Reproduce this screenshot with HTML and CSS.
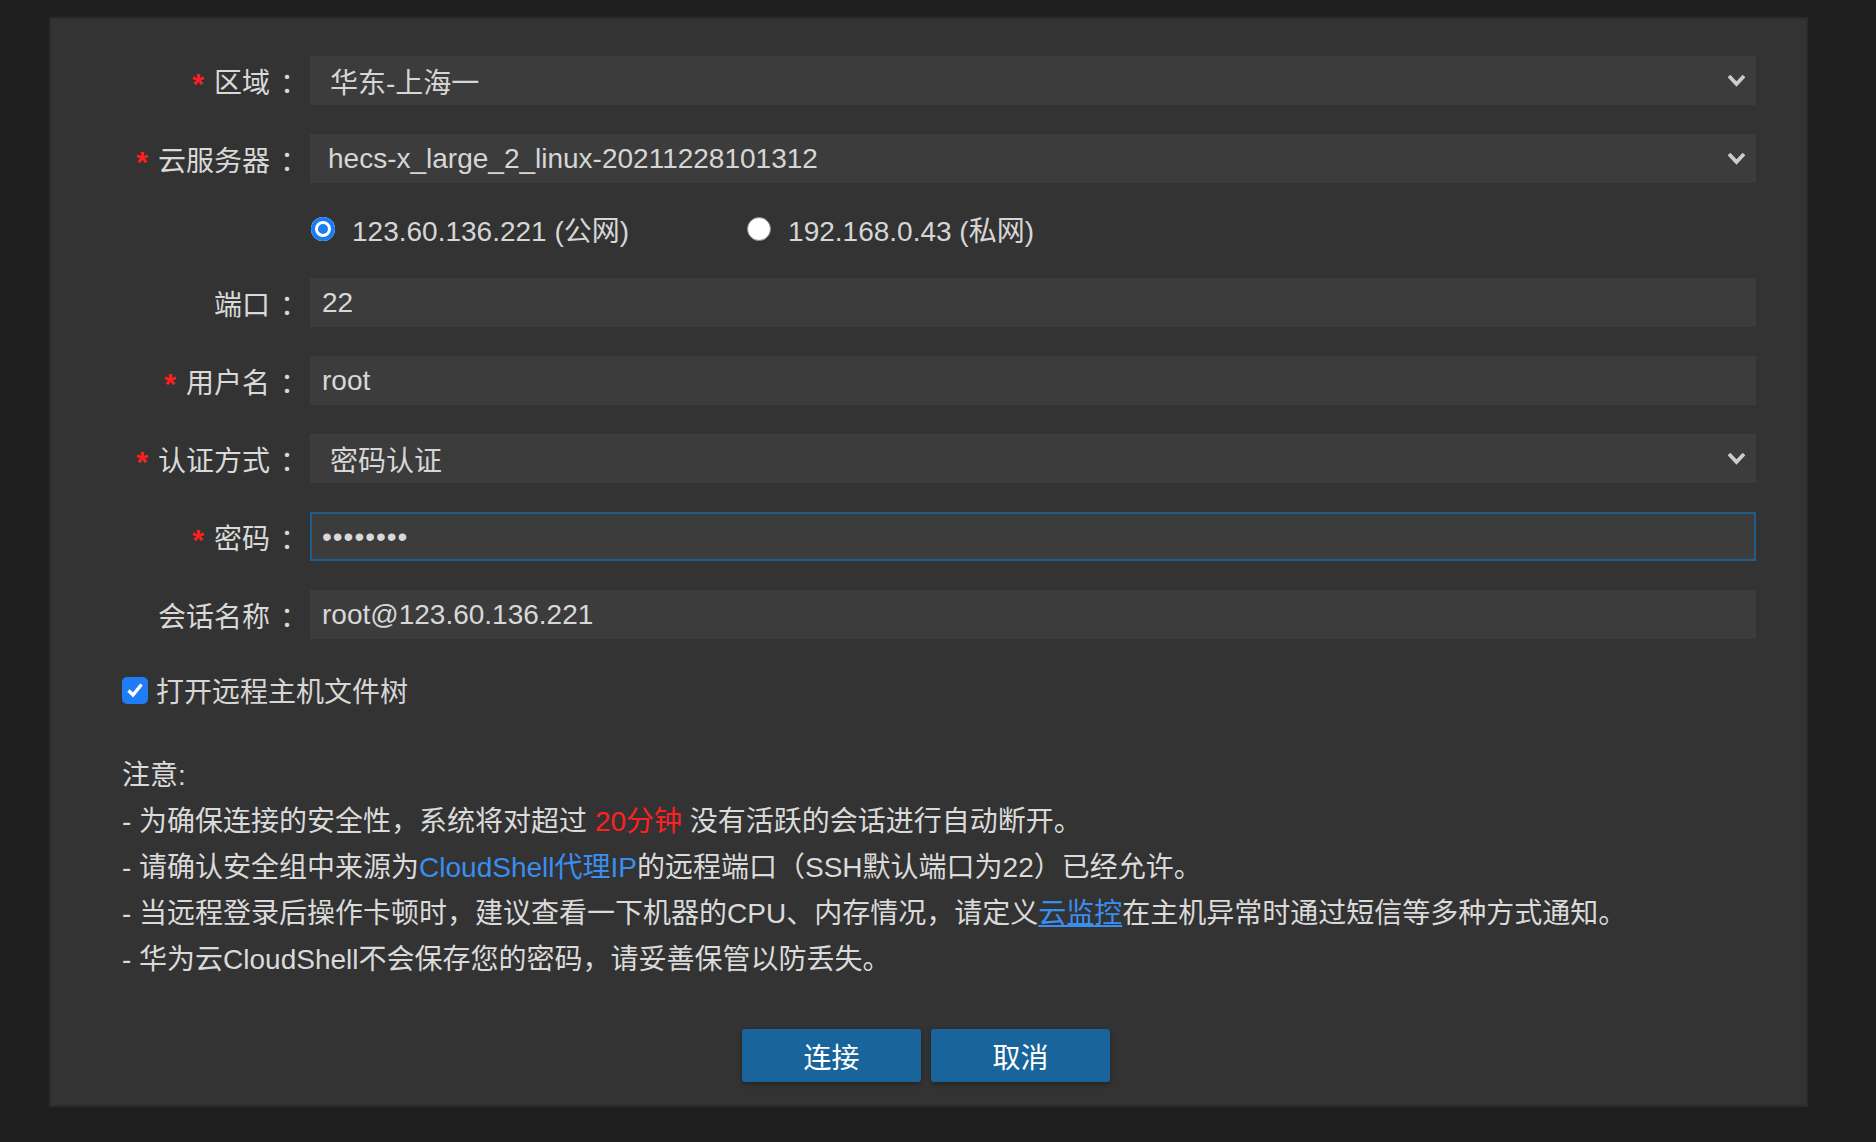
FILE: index.html
```html
<html>
<head>
    <title>CloudShell 远程登录</title>
    <meta charset="utf-8">
    <link rel="stylesheet" href="styles.css">
</head>
<body>
<div class="panel">
    <div class="form">
        <div class="form-row">
            <label class="field-label"><span class="req">*</span>区域<span class="colon">：</span></label>
            <div class="select">
                <span class="select-value">华东-上海一</span>
                <svg class="chevron" width="19" height="13" viewBox="0 0 19 13"><polyline points="2,2 9.5,10 17,2" fill="none" stroke="#cccccc" stroke-width="3.8"/></svg>
            </div>
        </div>
        <div class="form-row">
            <label class="field-label"><span class="req">*</span>云服务器<span class="colon">：</span></label>
            <div class="select">
                <span class="select-value latin">hecs-x_large_2_linux-20211228101312</span>
                <svg class="chevron" width="19" height="13" viewBox="0 0 19 13"><polyline points="2,2 9.5,10 17,2" fill="none" stroke="#cccccc" stroke-width="3.8"/></svg>
            </div>
        </div>
        <div class="form-row radio-row">
            <span></span>
            <div class="radios">
                <label class="radio"><span class="radio-dot checked"></span>123.60.136.221 (公网)</label>
                <label class="radio"><span class="radio-dot"></span>192.168.0.43 (私网)</label>
            </div>
        </div>
        <div class="form-row">
            <label class="field-label">端口<span class="colon">：</span></label>
            <input class="text-input" type="text" value="22">
        </div>
        <div class="form-row">
            <label class="field-label"><span class="req">*</span>用户名<span class="colon">：</span></label>
            <input class="text-input" type="text" value="root">
        </div>
        <div class="form-row">
            <label class="field-label"><span class="req">*</span>认证方式<span class="colon">：</span></label>
            <div class="select">
                <span class="select-value">密码认证</span>
                <svg class="chevron" width="19" height="13" viewBox="0 0 19 13"><polyline points="2,2 9.5,10 17,2" fill="none" stroke="#cccccc" stroke-width="3.8"/></svg>
            </div>
        </div>
        <div class="form-row">
            <label class="field-label"><span class="req">*</span>密码<span class="colon">：</span></label>
            <input class="text-input focused" type="password" value="12345678">
        </div>
        <div class="form-row">
            <label class="field-label">会话名称<span class="colon">：</span></label>
            <input class="text-input" type="text" value="root@123.60.136.221">
        </div>
    </div>

    <label class="check-row">
        <span class="checkbox">
            <svg width="20" height="20" viewBox="0 0 20 20"><polyline points="3.5,10.5 8,15 16.5,4.5" fill="none" stroke="#ffffff" stroke-width="3.4"/></svg>
        </span>
        打开远程主机文件树
    </label>

    <div class="notes">
        <p>注意:</p>
        <p>- 为确保连接的安全性，系统将对超过 <span class="warn">20分钟</span> 没有活跃的会话进行自动断开。</p>
        <p>- 请确认安全组中来源为<a class="link">CloudShell代理IP</a>的远程端口（SSH默认端口为22）已经允许。</p>
        <p>- 当远程登录后操作卡顿时，建议查看一下机器的CPU、内存情况，请定义<a class="link underline">云监控</a>在主机异常时通过短信等多种方式通知。</p>
        <p>- 华为云CloudShell不会保存您的密码，请妥善保管以防丢失。</p>
    </div>

    <div class="actions">
        <button class="btn">连接</button>
        <button class="btn">取消</button>
    </div>
</div>
</body>
</html>
```

FILE: styles.css
```css
body {
    margin: 0;
    background: #1e1e1e;
    font-family: "Liberation Sans", "Noto Sans CJK SC", sans-serif;
    font-size: 28px;
    color: #d6d6d6;
}

.panel {
    margin: 17px 0 0 49px;
    width: 1759px;
    height: 1090px;
    box-sizing: border-box;
    background: #333333;
    border: 2px solid #2b2b2b;
    padding: 37px 50px 0 51px;
}

.form {
    display: flex;
    flex-direction: column;
    gap: 29px;
}

.form-row {
    display: grid;
    grid-template-columns: 206px 1fr;
    column-gap: 2px;
    align-items: center;
    height: 49px;
}

.field-label {
    display: flex;
    justify-content: flex-end;
    align-items: center;
    white-space: nowrap;
    color: #d9d9d9;
}

.req {
    color: #ff1f1f;
    font-size: 30px;
    font-weight: bold;
    line-height: 1;
    margin: 6px 10px 0 0;
}

.colon {
    margin-left: 10px;
}

.select {
    height: 49px;
    background: #3c3c3c;
    display: flex;
    align-items: center;
    justify-content: space-between;
    padding: 0 10px 0 20px;
    box-sizing: border-box;
}

.select-value.latin {
    margin-left: -2px;
}

.text-input {
    height: 49px;
    width: 100%;
    box-sizing: border-box;
    background: #3c3c3c;
    border: 2px solid transparent;
    outline: none;
    padding: 0 10px;
    font: inherit;
    color: #d8d8d8;
    margin: 0;
}

.text-input.focused {
    border-color: #1f5d8c;
    letter-spacing: 1px;
}

.radio-row {
    height: 41px;
    margin-top: -4px;
}

.radios {
    display: flex;
    align-items: center;
    gap: 118px;
    padding-left: 1px;
}

.radio {
    display: flex;
    align-items: center;
    gap: 17px;
}

.radio-dot {
    width: 24px;
    height: 24px;
    border-radius: 50%;
    box-sizing: border-box;
    background: #ffffff;
    border: 1px solid #8a8a8a;
}

.radio-dot.checked {
    border: none;
    background: #1a7cf5;
    box-shadow: inset 0 0 0 4px #1a7cf5, inset 0 0 0 7px #ffffff;
}

.check-row {
    display: flex;
    align-items: center;
    gap: 8px;
    height: 44px;
    margin: 29px 0 0 20px;
}

.checkbox {
    width: 26px;
    height: 27px;
    border-radius: 5px;
    background: #1f7bf6;
    display: flex;
    align-items: center;
    justify-content: center;
}

.notes {
    margin: 41px 0 0 20px;
    line-height: 46px;
    color: #dadada;
}

.notes p {
    margin: 0;
}

.warn {
    color: #ff2020;
}

.link {
    color: #3a8ef0;
}

.link.underline {
    text-decoration: underline;
}

.actions {
    display: flex;
    justify-content: center;
    gap: 10px;
    margin-top: 46px;
    padding-right: 6px;
}

.btn {
    width: 179px;
    height: 53px;
    background: #19649b;
    color: #ffffff;
    border: none;
    border-radius: 3px;
    font: inherit;
    box-shadow: 0 2px 5px rgba(0, 0, 0, 0.35);
    cursor: pointer;
}
```
